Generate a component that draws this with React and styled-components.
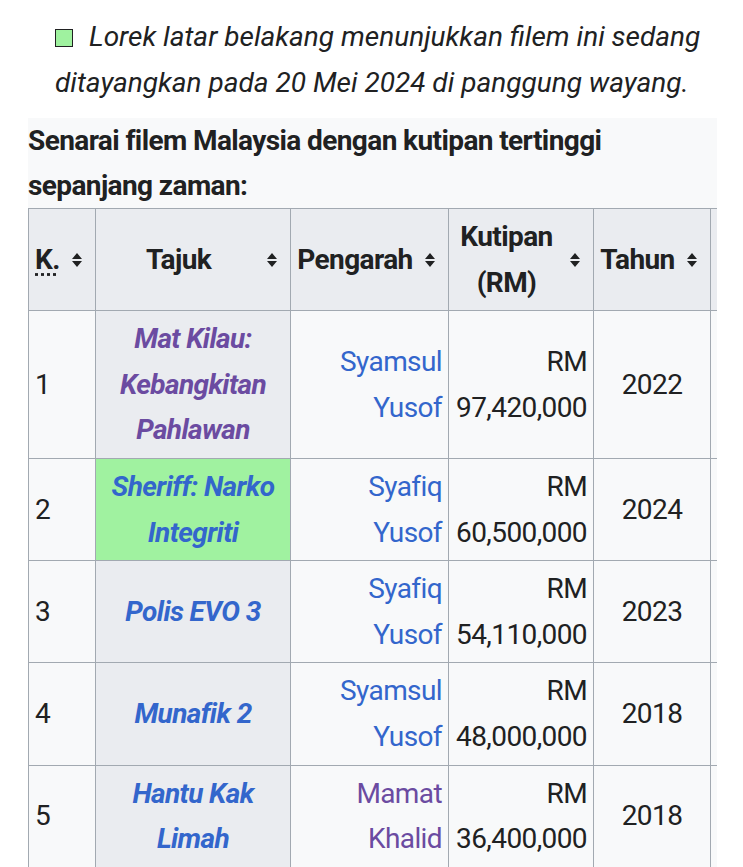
import React from "react";
import styled, { createGlobalStyle } from "styled-components";

const Global = createGlobalStyle`
  html, body { margin: 0; padding: 0; background: #fff; }
  body { font-family: Roboto, "Noto Sans", "Liberation Sans", sans-serif; color: #202122; }
`;

const Page = styled.div`
  padding: 14px 0 0 28px;
  width: 689px;
`;

const Legend = styled.p`
  margin: 0 0 12px 27px;
  font-size: 28px;
  line-height: 46px;
  font-style: italic;
  color: #202122;
`;

const Swatch = styled.span`
  display: inline-block;
  width: 16px;
  height: 16px;
  background: #9ff29f;
  border: 1px solid #202122;
  margin-right: 16px;
  vertical-align: -1px;
`;

const Scroller = styled.div`
  width: 689px;
  overflow: hidden;
`;

const Table = styled.table`
  border-collapse: collapse;
  table-layout: fixed;
  width: 860px;
  background: #f8f9fa;
  font-size: 28px;
  line-height: 45.6px;
  letter-spacing: -0.6px;
`;

const Caption = styled.caption`
  text-align: left;
  font-weight: 700;
  padding: 0;
  line-height: 45px;
  background: #f8f9fa;
  width: 689px;
`;

const Head = styled.th`
  background: #eaecf0;
  border: 1px solid #a2a9b1;
  padding: 5px 35px 5px 6px;
  font-weight: 700;
  text-align: ${(p) => p.$align || "center"};
  position: relative;
`;

const SortIcon = styled.svg`
  position: absolute;
  right: 12px;
  top: 50%;
  margin-top: -8px;
  width: 12px;
  height: 16px;
`;

const Abbr = styled.abbr`
  text-decoration: underline dotted;
  text-underline-offset: 4px;
`;

const Cell = styled.td`
  border: 1px solid #a2a9b1;
  padding: 5px 6px;
  text-align: ${(p) => p.$align || "left"};
  vertical-align: middle;
`;

const TitleCell = styled.th`
  border: 1px solid #a2a9b1;
  padding: 5px 6px;
  text-align: center;
  font-weight: 700;
  font-style: italic;
  background: ${(p) => (p.$current ? "#a0f2a0" : "#eaecf0")};
`;

const Link = styled.a`
  color: ${(p) => (p.$visited ? "#6b4ba1" : "#3366cc")};
  text-decoration: none;
`;

const Sort = () => (
  <SortIcon viewBox="0 0 12 16">
    <path d="M6 1 L11 7 H1 Z M6 15 L11 9 H1 Z" fill="#202122" />
  </SortIcon>
);

const rows = [
  { k: 1, t: "Mat Kilau: Kebangkitan Pahlawan", tv: true, d: "Syamsul Yusof", k2: "97,420,000", y: 2022 },
  { k: 2, t: "Sheriff: Narko Integriti", cur: true, d: "Syafiq Yusof", k2: "60,500,000", y: 2024 },
  { k: 3, t: "Polis EVO 3", d: "Syafiq Yusof", k2: "54,110,000", y: 2023 },
  { k: 4, t: "Munafik 2", d: "Syamsul Yusof", k2: "48,000,000", y: 2018 },
  { k: 5, t: "Hantu Kak Limah", d: "Mamat Khalid", dv: true, k2: "36,400,000", y: 2018 },
];

export default function App() {
  return (
    <>
      <Global />
      <Page>
        <Legend>
          <Swatch />
          Lorek latar belakang menunjukkan filem ini sedang ditayangkan pada 20 Mei 2024 di panggung wayang.
        </Legend>
        <Scroller>
          <Table>
            <Caption>Senarai filem Malaysia dengan kutipan tertinggi sepanjang zaman:</Caption>
            <colgroup>
              <col style={{ width: 67 }} />
              <col style={{ width: 195 }} />
              <col style={{ width: 158 }} />
              <col style={{ width: 145 }} />
              <col style={{ width: 117 }} />
              <col style={{ width: 178 }} />
            </colgroup>
            <thead>
              <tr>
                <Head $align="left"><Abbr title="Kedudukan">K.</Abbr><Sort /></Head>
                <Head>Tajuk<Sort /></Head>
                <Head>Pengarah<Sort /></Head>
                <Head>Kutipan (RM)<Sort /></Head>
                <Head>Tahun<Sort /></Head>
                <Head aria-label="Rujukan" />
              </tr>
            </thead>
            <tbody>
              {rows.map((r) => (
                <tr key={r.k}>
                  <Cell>{r.k}</Cell>
                  <TitleCell scope="row" $current={r.cur}>
                    <Link href="#" $visited={r.tv}>{r.t}</Link>
                  </TitleCell>
                  <Cell $align="right"><Link href="#" $visited={r.dv}>{r.d}</Link></Cell>
                  <Cell $align="right">RM {r.k2}</Cell>
                  <Cell $align="center">{r.y}</Cell>
                  <Cell />
                </tr>
              ))}
            </tbody>
          </Table>
        </Scroller>
      </Page>
    </>
  );
}
